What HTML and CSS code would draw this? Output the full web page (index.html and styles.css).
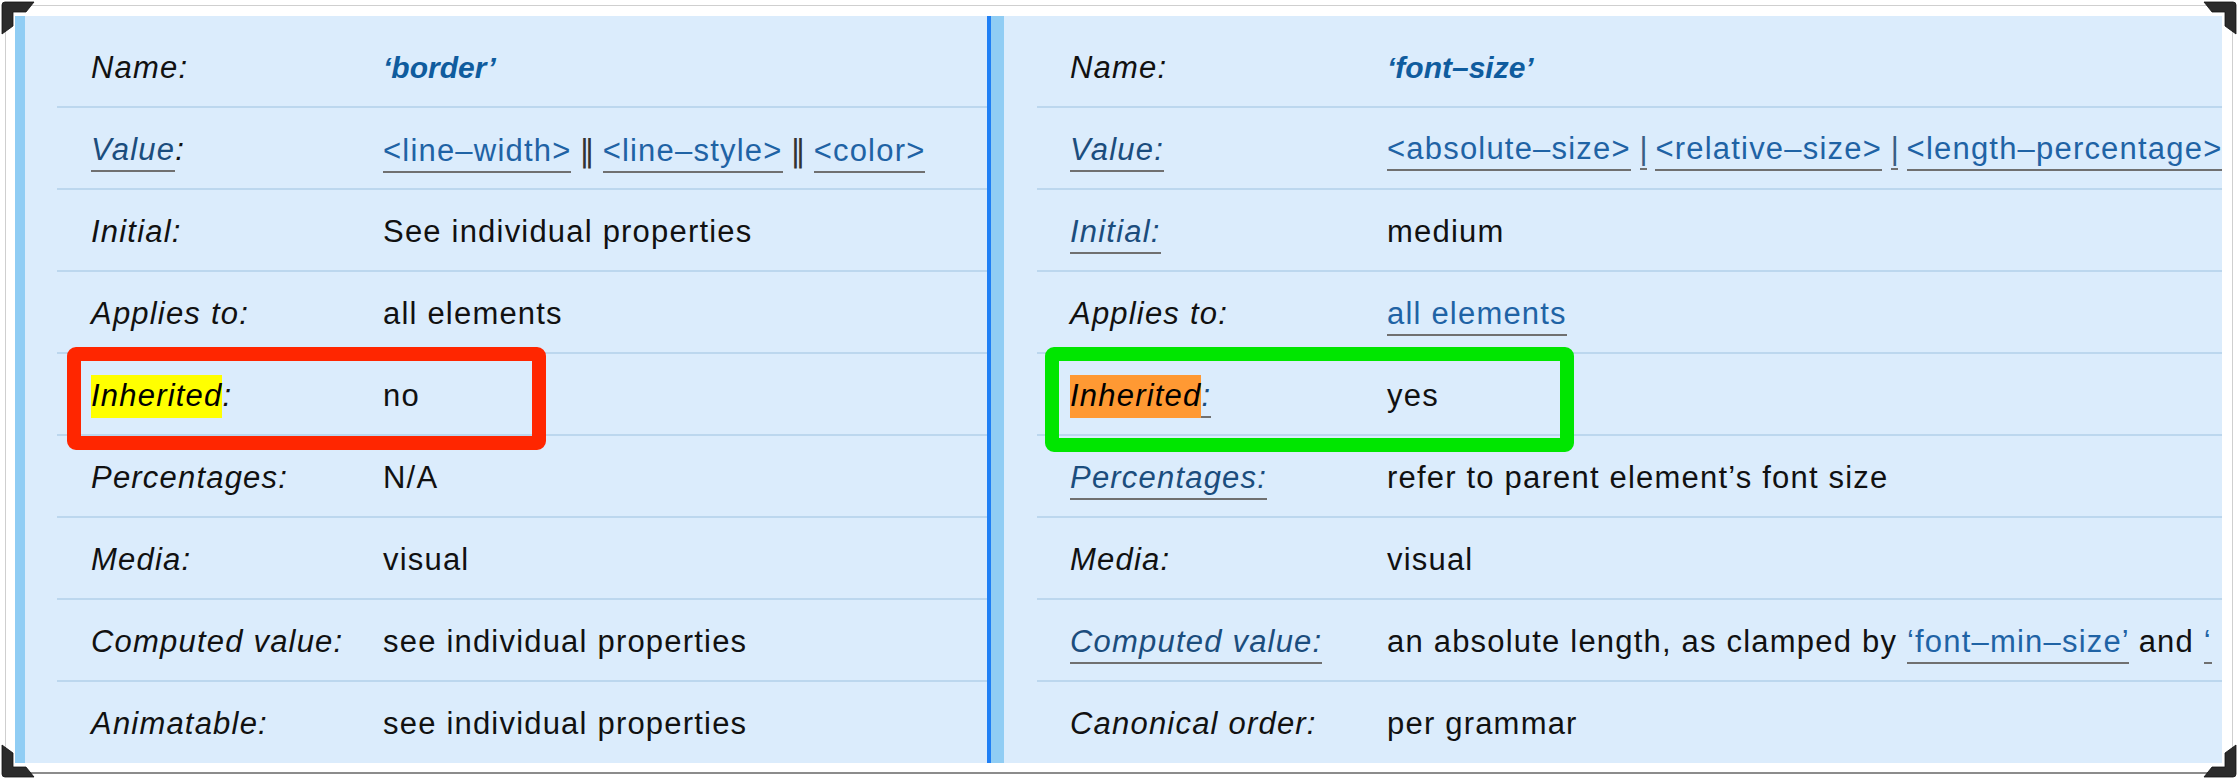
FILE: index.html
```html
<!DOCTYPE html>
<html lang="en">
<head>
<meta charset="utf-8">
<title>Property definitions</title>
<link rel="stylesheet" href="styles.css">
</head>
<body>
<div class="frame">
  <svg class="corner tl" viewBox="0 0 34 34"><path d="M4 1 H33 L25 11 H12 V25 L1 33 V4 Q1 1 4 1 Z"/></svg>
  <svg class="corner tr" viewBox="0 0 34 34"><path d="M4 1 H33 L25 11 H12 V25 L1 33 V4 Q1 1 4 1 Z"/></svg>
  <svg class="corner bl" viewBox="0 0 34 34"><path d="M4 1 H33 L25 11 H12 V25 L1 33 V4 Q1 1 4 1 Z"/></svg>
  <svg class="corner br" viewBox="0 0 34 34"><path d="M4 1 H33 L25 11 H12 V25 L1 33 V4 Q1 1 4 1 Z"/></svg>

  <div class="panels">
    <section class="panel left">
      <div class="row"><div class="lbl">Name:</div><div class="val"><b class="prop">‘border’</b></div></div>
      <div class="row"><div class="lbl"><a class="ll">Value</a>:</div><div class="val"><a class="ln">&lt;line–width&gt;</a> <span class="dbar">‖</span> <a class="ln">&lt;line–style&gt;</a> <span class="dbar">‖</span> <a class="ln">&lt;color&gt;</a></div></div>
      <div class="row"><div class="lbl">Initial:</div><div class="val">See individual properties</div></div>
      <div class="row"><div class="lbl">Applies to:</div><div class="val">all elements</div></div>
      <div class="row"><div class="lbl"><mark class="hl hl-y">Inherited</mark>:</div><div class="val">no</div></div>
      <div class="row"><div class="lbl">Percentages:</div><div class="val">N/A</div></div>
      <div class="row"><div class="lbl">Media:</div><div class="val">visual</div></div>
      <div class="row"><div class="lbl">Computed value:</div><div class="val">see individual properties</div></div>
      <div class="row last"><div class="lbl">Animatable:</div><div class="val">see individual properties</div></div>
      <div class="callout red"></div>
    </section>
    <div class="sep"></div>
    <section class="panel right">
      <div class="row"><div class="lbl">Name:</div><div class="val"><b class="prop">‘font–size’</b></div></div>
      <div class="row"><div class="lbl"><a class="ll">Value:</a></div><div class="val"><a class="ln">&lt;absolute–size&gt;</a> <span class="bar">|</span> <a class="ln">&lt;relative–size&gt;</a> <span class="bar">|</span> <a class="ln">&lt;length–percentage&gt;</a></div></div>
      <div class="row"><div class="lbl"><a class="ll">Initial:</a></div><div class="val">medium</div></div>
      <div class="row"><div class="lbl">Applies to:</div><div class="val"><a class="ln">all elements</a></div></div>
      <div class="row"><div class="lbl"><a class="ll"><mark class="hl hl-o">Inherited</mark>:</a></div><div class="val">yes</div></div>
      <div class="row"><div class="lbl"><a class="ll">Percentages:</a></div><div class="val">refer to parent element’s font size</div></div>
      <div class="row"><div class="lbl">Media:</div><div class="val">visual</div></div>
      <div class="row"><div class="lbl"><a class="ll">Computed value:</a></div><div class="val">an absolute length, as clamped by <a class="ln">‘font–min–size’</a> and <a class="ln">‘</a></div></div>
      <div class="row last"><div class="lbl">Canonical order:</div><div class="val">per grammar</div></div>
      <div class="callout green"></div>
    </section>
  </div>
</div>
</body>
</html>
```
FILE: styles.css
```css
html, body {
  margin: 0;
  padding: 0;
  background: #ffffff;
}

body {
  font-family: "Liberation Sans", Arial, sans-serif;
  font-size: 31px;
  letter-spacing: 1.2px;
  color: #111111;
}

.frame {
  position: relative;
  margin: 5px;
  border: 1px solid #cfcfcf;
  border-bottom: 2px solid #8c8c8c;
  padding: 10px 10px 9px 9px;
  background: #ffffff;
}

.corner {
  position: absolute;
  width: 34px;
  height: 34px;
  fill: #2b2b2b;
  stroke: #111111;
  stroke-width: 0.8;
  z-index: 3;
}
.corner.tl { left: -5px; top: -5px; }
.corner.tr { right: -5px; top: -5px; transform: scaleX(-1); }
.corner.bl { left: -5px; bottom: -6px; transform: scaleY(-1); }
.corner.br { right: -5px; bottom: -6px; transform: scale(-1, -1); }

.panels {
  display: flex;
}

.panel {
  position: relative;
  box-sizing: border-box;
  background: #dbecfc;
  padding: 10px 0 1px 32px;
}
.panel.left {
  width: 972px;
  flex: none;
  border-left: 10px solid #90cdf4;
}
.panel.right {
  flex: 1;
  min-width: 0;
  overflow: hidden;
  border-left: 13px solid #90cdf4;
  padding-left: 33px;
}

.sep {
  width: 4px;
  flex: none;
  background: #1f7ff5;
}

.row {
  box-sizing: border-box;
  display: grid;
  grid-template-columns: 292px 1fr;
  align-items: center;
  height: 82px;
  padding-top: 4px;
  border-bottom: 2px solid #bcd7ee;
  padding-left: 34px;
  white-space: nowrap;
}
.panel.right .row {
  grid-template-columns: 317px 1fr;
  padding-left: 33px;
}
.row.last {
  height: 80px;
  border-bottom: none;
}

.lbl {
  font-style: italic;
}

.val {
  min-width: 0;
}

.prop {
  color: #0f5c9e;
  font-style: italic;
  font-weight: bold;
  font-size: 30px;
  letter-spacing: 0;
}

.ll {
  color: #1b4d7d;
  border-bottom: 2px solid #707070;
  padding-bottom: 3px;
}

.ln {
  color: #1f63a5;
  border-bottom: 2px solid #707070;
  padding-bottom: 3px;
}

.dbar {
  color: #333333;
  font-family: "DejaVu Sans", sans-serif;
  font-size: 31px;
  letter-spacing: 0;
  margin: 0 -2px;
}

.bar {
  color: #3a5f85;
  display: inline-block;
  border-bottom: 2px solid #707070;
  line-height: 1;
  padding-bottom: 4px;
  letter-spacing: 0;
  width: 7px;
  margin: 0 -1px;
  text-align: center;
}

.hl {
  color: #000000;
  padding: 3px 0 5px 0;
}
.hl-y {
  background: #ffff00;
}
.hl-o {
  background: #ff9933;
}

.callout {
  position: absolute;
  box-sizing: border-box;
  border: 14px solid;
  border-radius: 9px;
  top: 331px;
}
.callout.red {
  left: 42px;
  width: 479px;
  height: 103px;
  border-color: #ff2600;
}
.callout.green {
  left: 41px;
  width: 529px;
  height: 105px;
  border-color: #00e600;
}
```
